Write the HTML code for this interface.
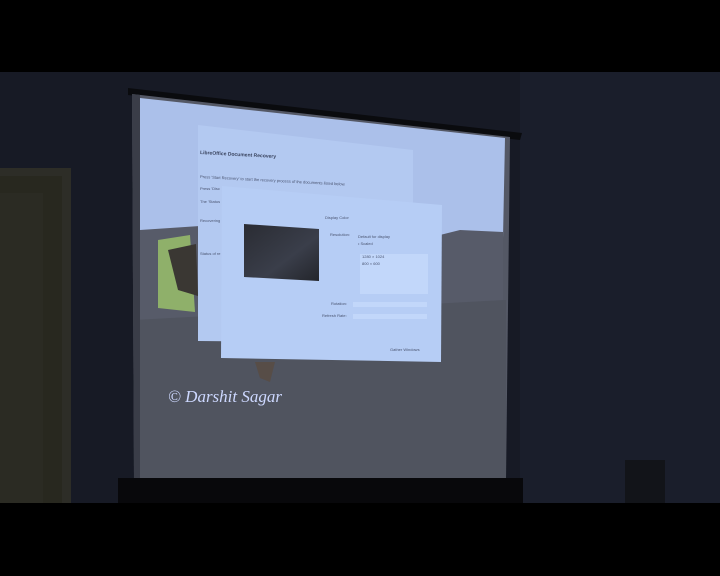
<!DOCTYPE html>
<html><head><meta charset="utf-8"><style>
html,body{margin:0;padding:0;background:#000;width:720px;height:576px;overflow:hidden}
svg{display:block}
</style></head><body>
<svg width="720" height="576" viewBox="0 0 720 576" xmlns="http://www.w3.org/2000/svg">
<defs>
<linearGradient id="mon" x1="0" y1="0" x2="1" y2="1">
<stop offset="0" stop-color="#2a2c33"/><stop offset="0.6" stop-color="#3a3e4a"/><stop offset="1" stop-color="#23252b"/>
</linearGradient>
</defs>
<rect x="0" y="0" width="720" height="576" fill="#000"/>
<rect x="0" y="72" width="720" height="431" fill="#171a25"/>
<rect x="520" y="72" width="200" height="431" fill="#1a1e2b"/>
<!-- door -->
<rect x="0" y="168" width="71" height="335" fill="#2d2d27"/>
<rect x="0" y="176" width="62" height="327" fill="#28281f"/>
<rect x="0" y="193" width="43" height="310" fill="#2b2b23"/>
<!-- screen frame -->
<polygon points="128,88 522,133 520,140 128,95" fill="#0a0b0e"/>
<polygon points="132,94 510,137 506,480 134,480" fill="#545865"/>
<!-- desktop upper -->
<polygon points="140,98 505,138 503,238 140,232" fill="#abc0ea"/>
<polygon points="140,230 200,226 220,250 420,240 460,230 503,232 503,300 140,320" fill="#575b69"/>
<polygon points="158,240 190,235 195,312 158,308" fill="#8fb06a"/>
<polygon points="168,250 196,244 198,296 178,290" fill="#3a3733"/>
<polygon points="134,320 506,300 506,480 134,480" fill="#50545f"/>
<polygon points="132,94 140,95 140,480 134,480" fill="#3a3d48"/>
<!-- back window -->
<polygon points="198,125 413,150 413,343 198,341" fill="#b3c9f1"/>
<text x="200" y="154" font-family="Liberation Sans,sans-serif" font-size="5" font-weight="bold" fill="#3b4560" transform="rotate(3 200 154)">LibreOffice Document Recovery</text>
<text x="200" y="178" font-family="Liberation Sans,sans-serif" font-size="4" fill="#4a5470" transform="rotate(3 200 178)">Press 'Start Recovery' to start the recovery process of the documents listed below.</text>
<text x="200" y="190" font-family="Liberation Sans,sans-serif" font-size="4" fill="#4a5470">Press 'Disc</text>
<text x="200" y="203" font-family="Liberation Sans,sans-serif" font-size="4" fill="#4a5470">The 'Status</text>
<text x="200" y="222" font-family="Liberation Sans,sans-serif" font-size="4" fill="#4a5470">Recovering</text>
<text x="200" y="255" font-family="Liberation Sans,sans-serif" font-size="4" fill="#4a5470">Status of re</text>
<!-- front window -->
<polygon points="222,186 442,205 441,362 221,358" fill="#b6cdf5"/>
<text x="325" y="219" font-family="Liberation Sans,sans-serif" font-size="4" fill="#4a5470">Display   Color</text>
<polygon points="244,224 319,229 319,281 244,277" fill="url(#mon)"/>
<text x="330" y="236" font-family="Liberation Sans,sans-serif" font-size="4" fill="#4a5470">Resolution:</text>
<text x="358" y="238" font-family="Liberation Sans,sans-serif" font-size="4" fill="#4a5470">Default for display</text>
<text x="358" y="245" font-family="Liberation Sans,sans-serif" font-size="4" fill="#4a5470">• Scaled</text>
<rect x="360" y="254" width="68" height="40" fill="#c2d7fa"/>
<text x="362" y="258" font-family="Liberation Sans,sans-serif" font-size="4" fill="#4a5470">1280 × 1024</text>
<text x="362" y="265" font-family="Liberation Sans,sans-serif" font-size="4" fill="#4a5470">800 × 600</text>
<text x="331" y="305" font-family="Liberation Sans,sans-serif" font-size="4" fill="#4a5470">Rotation:</text>
<rect x="353" y="302" width="74" height="5" fill="#c2d7fa"/>
<text x="322" y="317" font-family="Liberation Sans,sans-serif" font-size="4" fill="#4a5470">Refresh Rate:</text>
<rect x="353" y="314" width="74" height="5" fill="#c2d7fa"/>
<text x="390" y="351" font-family="Liberation Sans,sans-serif" font-size="4" fill="#4a5470">Gather Windows</text>
<polygon points="255,362 275,362 270,382 260,378" fill="#5e4530" opacity="0.5"/>
<text x="168" y="402" font-family="Liberation Serif,serif" font-style="italic" font-size="17" fill="#cdd8ff">© Darshit Sagar</text>
<!-- base -->
<rect x="118" y="478" width="405" height="25" fill="#08080b"/>
<rect x="625" y="460" width="40" height="43" fill="#121419"/>
<rect x="0" y="503" width="720" height="73" fill="#000"/>
</svg>
</body></html>
